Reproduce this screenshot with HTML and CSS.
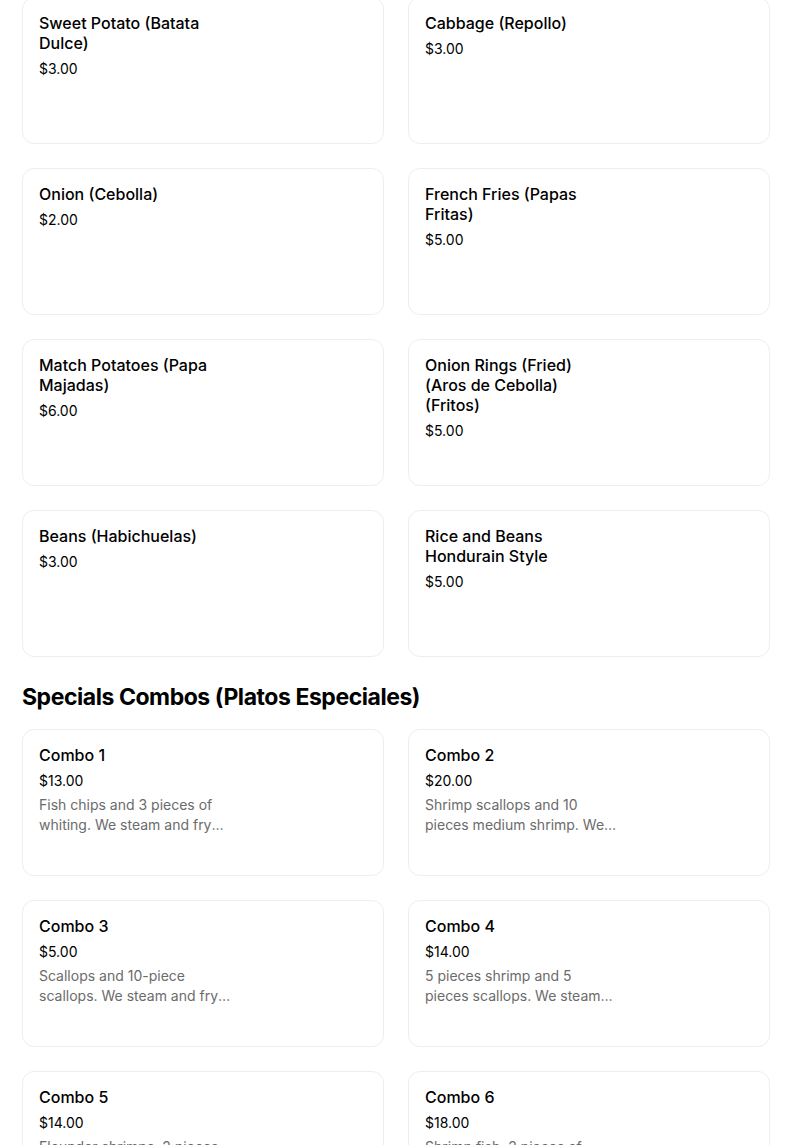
FILE: index.html
```html
<!DOCTYPE html>
<html lang="en">
<head>
<meta charset="utf-8">
<title>Menu</title>
<link rel="stylesheet" href="styles.css">
</head>
<body>
<div class="page">
  <div class="grid shifted">
    <div class="card"><div class="info"><div class="title">Sweet Potato (Batata Dulce)</div><div class="price">$3.00</div></div></div>
    <div class="card"><div class="info"><div class="title">Cabbage (Repollo)</div><div class="price">$3.00</div></div></div>
    <div class="card"><div class="info"><div class="title">Onion (Cebolla)</div><div class="price">$2.00</div></div></div>
    <div class="card"><div class="info"><div class="title">French Fries (Papas Fritas)</div><div class="price">$5.00</div></div></div>
    <div class="card"><div class="info"><div class="title">Match Potatoes (Papa Majadas)</div><div class="price">$6.00</div></div></div>
    <div class="card"><div class="info"><div class="title">Onion Rings (Fried) (Aros de Cebolla) (Fritos)</div><div class="price">$5.00</div></div></div>
    <div class="card"><div class="info"><div class="title">Beans (Habichuelas)</div><div class="price">$3.00</div></div></div>
    <div class="card"><div class="info"><div class="title">Rice and Beans Hondurain Style</div><div class="price">$5.00</div></div></div>
  </div>

  <h2 class="section-title">Specials Combos (Platos Especiales)</h2>

  <div class="grid">
    <div class="card"><div class="info"><div class="title">Combo 1</div><div class="price">$13.00</div><div class="desc">Fish chips and 3 pieces of whiting. We steam and fry everything to order.</div></div></div>
    <div class="card"><div class="info"><div class="title">Combo 2</div><div class="price">$20.00</div><div class="desc">Shrimp scallops and 10 pieces medium shrimp. We steam and fry everything to order.</div></div></div>
    <div class="card"><div class="info"><div class="title">Combo 3</div><div class="price">$5.00</div><div class="desc">Scallops and 10-piece scallops. We steam and fry everything to order.</div></div></div>
    <div class="card"><div class="info"><div class="title">Combo 4</div><div class="price">$14.00</div><div class="desc">5 pieces shrimp and 5 pieces scallops. We steam and fry everything to order.</div></div></div>
    <div class="card"><div class="info"><div class="title">Combo 5</div><div class="price">$14.00</div><div class="desc">Flounder shrimps, 2 pieces flounder and 5 shrimp. We steam and fry everything.</div></div></div>
    <div class="card"><div class="info"><div class="title">Combo 6</div><div class="price">$18.00</div><div class="desc">Shrimp fish, 2 pieces of whiting and 5 shrimp. We steam and fry everything.</div></div></div>
  </div>
</div>
</body>
</html>
```

FILE: styles.css
```css
* { box-sizing: border-box; }

html, body {
  margin: 0;
  padding: 0;
  background: #ffffff;
}

body {
  font-family: "Inter", "Liberation Sans", sans-serif;
  color: #000000;
  overflow: hidden;
}

.page {
  padding: 0 34px 0 22px;
}

.grid {
  display: grid;
  grid-template-columns: 1fr 1fr;
  column-gap: 24px;
  row-gap: 24px;
}

.shifted {
  margin-top: -3px;
}

.card {
  height: 147px;
  border: 1px solid #eeeeee;
  border-radius: 12px;
  padding: 15px 16px;
  background: #ffffff;
}

.info {
  width: 192px;
}

.title {
  font-size: 16px;
  line-height: 20px;
  font-weight: 500;
  color: #000000;
}

.price {
  margin-top: 6px;
  font-size: 14px;
  line-height: 20px;
  font-weight: 400;
  color: #000000;
}

.desc {
  margin-top: 4px;
  font-size: 14px;
  line-height: 20px;
  color: #6b6b6b;
  display: -webkit-box;
  -webkit-line-clamp: 2;
  -webkit-box-orient: vertical;
  overflow: hidden;
}

.section-title {
  margin: 0;
  padding: 24px 0 16px;
  font-size: 23px;
  line-height: 32px;
  font-weight: 700;
  letter-spacing: -0.45px;
}
```
